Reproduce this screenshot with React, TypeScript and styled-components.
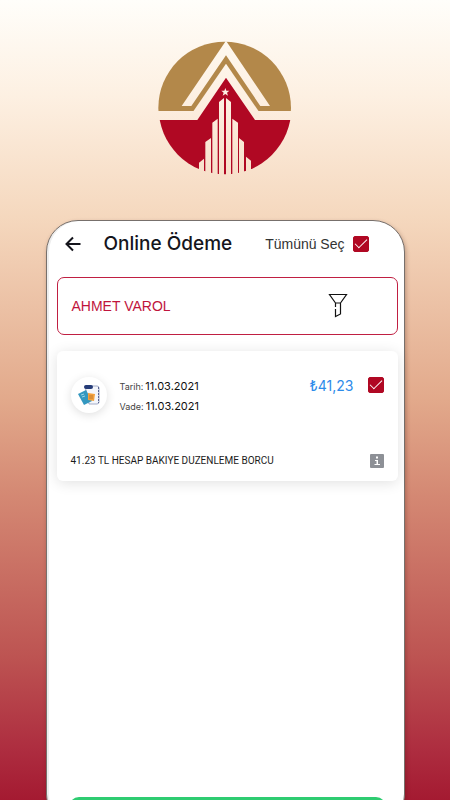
import React from "react";
import styled, { createGlobalStyle } from "styled-components";

const GlobalStyle = createGlobalStyle`
  *, *::before, *::after { box-sizing: border-box; }
  body { margin: 0; font-family: Inter, "Liberation Sans", sans-serif; }
`;

const Page = styled.main`
  height: 100vh;
  overflow: hidden;
  display: flex;
  flex-direction: column;
  align-items: center;
  background: linear-gradient(180deg, #fffefa 0%, #fdf0e2 12%, #f5d8be 27%, #e2a98b 50%, #d48873 62%, #bd5452 82%, #ad2c3f 94%, #a41a31 100%);
`;

const LogoArea = styled.header`
  flex: none;
  height: 220px;
  padding-top: 32px;
`;

const Phone = styled.section`
  flex: none;
  width: calc(100% - 91px);
  min-height: calc(100vh - 194px);
  display: flex;
  flex-direction: column;
  padding: 0 6px 0 10px;
  border: 1px solid #77706c;
  border-radius: 32px;
  background: #fff;
  box-shadow: 1px 2px 4px rgba(60, 20, 10, 0.3), inset 2px 0 #eee;
`;

const TopBar = styled.div`
  display: flex;
  align-items: center;
  height: 46px;
  padding: 0 29px 0 7px;
`;

const IconButton = styled.button`
  display: grid;
  place-items: center;
  padding: 0;
  border: 0;
  background: none;
  color: inherit;
  cursor: pointer;
`;

const Title = styled.h1`
  margin: 0 auto 0 22px;
  font-size: 19px;
  font-weight: 500;
  line-height: 24px;
  color: #15151c;
  white-space: nowrap;
`;

const SelectAll = styled.label`
  display: flex;
  align-items: center;
  gap: 8px;
  font: 14px/20px "Liberation Sans", sans-serif;
  color: #333;
  white-space: nowrap;
`;

const Tick = styled.input`
  appearance: none;
  flex: none;
  width: 16px;
  height: 16px;
  margin: 0;
  border: 1px solid #b00823;
  border-radius: 2px;
  display: grid;
  place-items: center;
  cursor: pointer;

  &:checked { background: #b00823; }

  &:checked::before {
    content: "";
    width: 12px;
    height: 6px;
    border: solid #fff;
    border-width: 0 0 1px 1px;
    transform: translateY(-2px) rotate(-45deg);
  }
`;

const Customer = styled.div`
  display: flex;
  align-items: center;
  justify-content: space-between;
  height: 58px;
  margin-top: 10px;
  padding: 0 49px 0 14px;
  border: 1px solid #c01f42;
  border-radius: 7px;
  font: 14px/20px "Liberation Sans", sans-serif;
  color: #c0143c;
`;

const Card = styled.article`
  height: 130px;
  margin-top: 16px;
  padding: 23px 14px 12px;
  display: flex;
  flex-direction: column;
  justify-content: space-between;
  border-radius: 6px;
  box-shadow: 0 2px 14px rgba(0, 0, 0, 0.12);
`;

const CardRow = styled.div`
  display: flex;
  align-items: center;
`;

const Avatar = styled.div`
  width: 36px;
  height: 36px;
  display: grid;
  place-items: center;
  border-radius: 50%;
  box-shadow: 0 2px 10px rgba(0, 0, 0, 0.13);
`;

const Dates = styled.dl`
  margin: 0 auto 0 13px;
  padding-top: 2px;
`;

const DateLine = styled.div`
  display: flex;
  align-items: baseline;
  gap: 2px;
  height: 20px;
  line-height: 20px;
`;

const DateLabel = styled.dt`
  font-size: 9px;
  color: #444;
`;

const DateValue = styled.dd`
  margin: 0;
  font-size: 11px;
  color: #111;
`;

const AmountGroup = styled.label`
  display: flex;
  align-items: center;
  gap: 14px;
  align-self: flex-start;
  height: 22px;
  font-size: 14px;
  color: #2d8bea;
`;

const Description = styled.p`
  margin: 0 auto 0 0;
  font-family: Roboto, sans-serif;
  font-size: 10px;
  line-height: 16px;
  color: #1c1c1c;
`;

const PayButton = styled.button`
  flex: none;
  height: 28px;
  margin: auto 12px 0;
  border: 0;
  border-radius: 10px;
  background: #2ecc71;
`;

const Logo = () => (
  <svg width="150" height="150" viewBox="0 0 450 450" role="img" aria-label="Logo">
    <defs>
      <mask id="gold">
        <rect width="450" height="237" fill="#fff" />
        <path d="M228 26L360 222H331L228 70L124 222H95Z" fill="#000" />
        <path d="M228 95L326 238H130Z" fill="#000" />
      </mask>
      <mask id="red">
        <path d="M0 264H142L228 137L315 264H450V450H0Z" fill="#fff" />
        <path
          fill="#000"
          d="M207 450V210L222 198V450ZM228 450V198L243 210V450ZM187 450V272L203 260V450ZM247 450V260L264 272V450ZM166 450V330L183 318V450ZM267 450V318L282 330V450ZM147 450V392L162 380V450ZM288 450V374L303 386V450Z"
        />
        <path fill="#000" d="M226 168L229 176L238 176L231 182L234 191L226 186L218 191L221 182L214 176L223 176Z" />
      </mask>
    </defs>
    <circle cx="224" cy="228" r="199" fill="#b3884a" mask="url(#gold)" />
    <circle cx="225" cy="228" r="199" fill="#b00823" mask="url(#red)" />
  </svg>
);

const BackIcon = () => (
  <svg width="18" height="18" viewBox="0 0 18 18" fill="none" stroke="#15151c" strokeWidth="2">
    <path d="M16.500 9H3M9 2.500L2.500 9L9 15.500" />
  </svg>
);

const FilterIcon = () => (
  <svg width="20" height="26" viewBox="0 0 20 26" fill="none" stroke="#111" strokeWidth="1.200">
    <path d="M1.500 1.500H18.500L12.500 10H7.500ZM7.500 16V23.500L12.500 21V10M7.500 10V14" />
  </svg>
);

const BillIcon = () => (
  <svg width="24" height="24" viewBox="0 0 24 24">
    <path d="M8 3H20Q22 3 22 5V19Q22 21 20 21H12Z" fill="#f4f6fb" stroke="#a3acc8" />
    <path d="M21.500 4V20" stroke="#5c6794" strokeDasharray="2 1" />
    <rect x="7" y="2" width="9" height="4" rx="2" fill="#263c78" />
    <path d="M1 11L9 7L15 18L7 22Z" fill="#3498c0" />
    <path d="M4 12L7 11M5 14L8 13" stroke="#96d5e6" />
    <path d="M11 10L18 11L17 18L11 17Z" fill="#f4a13c" />
    <path d="M12 13H16M12 15H16" stroke="#ac6f30" strokeWidth=".7" />
  </svg>
);

const InfoIcon = () => (
  <svg width="14" height="14" viewBox="0 0 14 14">
    <rect width="14" height="14" rx="1" fill="#8d9096" />
    <path d="M6 2.500H8V4.500H6ZM5 6H8V10H10V11H4.500V10H6.500V7H5Z" fill="#fff" />
  </svg>
);

export default function App() {
  return (
    <>
      <GlobalStyle />
      <Page>
        <LogoArea><Logo /></LogoArea>
        <Phone>
          <TopBar>
            <IconButton aria-label="Geri"><BackIcon /></IconButton>
            <Title>Online Ödeme</Title>
            <SelectAll>Tümünü Seç<Tick type="checkbox" defaultChecked /></SelectAll>
          </TopBar>
          <Customer>
            AHMET VAROL
            <IconButton aria-label="Filtrele"><FilterIcon /></IconButton>
          </Customer>
          <Card>
            <CardRow>
              <Avatar><BillIcon /></Avatar>
              <Dates>
                <DateLine><DateLabel>Tarih:</DateLabel><DateValue>11.03.2021</DateValue></DateLine>
                <DateLine><DateLabel>Vade:</DateLabel><DateValue>11.03.2021</DateValue></DateLine>
              </Dates>
              <AmountGroup>₺41,23<Tick type="checkbox" defaultChecked /></AmountGroup>
            </CardRow>
            <CardRow>
              <Description>41.23 TL HESAP BAKIYE DUZENLEME BORCU</Description>
              <IconButton aria-label="Bilgi"><InfoIcon /></IconButton>
            </CardRow>
          </Card>
          <PayButton aria-label="Öde" />
        </Phone>
      </Page>
    </>
  );
}
